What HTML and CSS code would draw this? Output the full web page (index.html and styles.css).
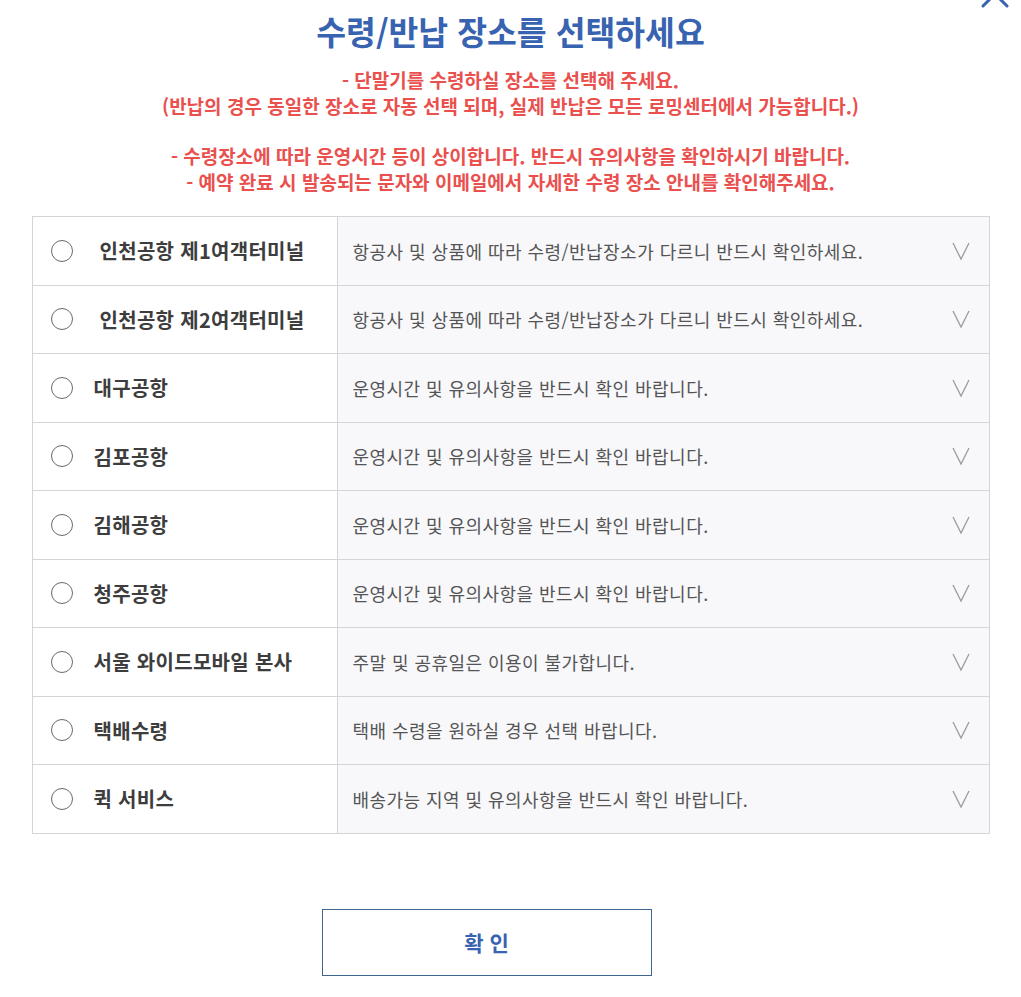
FILE: index.html
```html
<!DOCTYPE html>
<html lang="ko">
<head>
<meta charset="utf-8">
<title>수령/반납 장소를 선택하세요</title>
<link rel="stylesheet" href="styles.css">
</head>
<body>
<div class="modal">
  <button class="close" type="button" aria-label="닫기">
    <svg width="30" height="30" viewBox="0 0 30 30"><path d="M3 3 L27 27 M27 3 L3 27" stroke="#3763b0" stroke-width="3" fill="none" stroke-linecap="round"/></svg>
  </button>
  <h1 class="title">수령/반납 장소를 선택하세요</h1>
  <div class="notice">
    <p>- 단말기를 수령하실 장소를 선택해 주세요.<br>(반납의 경우 동일한 장소로 자동 선택 되며, 실제 반납은 모든 로밍센터에서 가능합니다.)</p>
    <p>- 수령장소에 따라 운영시간 등이 상이합니다. 반드시 유의사항을 확인하시기 바랍니다.<br>- 예약 완료 시 발송되는 문자와 이메일에서 자세한 수령 장소 안내를 확인해주세요.</p>
  </div>
  <div class="places">
    <div class="row">
      <label class="name"><span class="radio"></span><span class="label label-wide">인천공항 제1여객터미널</span></label>
      <div class="desc"><span>항공사 및 상품에 따라 수령/반납장소가 다르니 반드시 확인하세요.</span><svg class="chev" width="20" height="20" viewBox="0 0 20 20"><polyline points="2,2 10,18 18,2" fill="none" stroke="#9b9b9b" stroke-width="1.3"/></svg></div>
    </div>
    <div class="row">
      <label class="name"><span class="radio"></span><span class="label label-wide">인천공항 제2여객터미널</span></label>
      <div class="desc"><span>항공사 및 상품에 따라 수령/반납장소가 다르니 반드시 확인하세요.</span><svg class="chev" width="20" height="20" viewBox="0 0 20 20"><polyline points="2,2 10,18 18,2" fill="none" stroke="#9b9b9b" stroke-width="1.3"/></svg></div>
    </div>
    <div class="row">
      <label class="name"><span class="radio"></span><span class="label">대구공항</span></label>
      <div class="desc"><span>운영시간 및 유의사항을 반드시 확인 바랍니다.</span><svg class="chev" width="20" height="20" viewBox="0 0 20 20"><polyline points="2,2 10,18 18,2" fill="none" stroke="#9b9b9b" stroke-width="1.3"/></svg></div>
    </div>
    <div class="row">
      <label class="name"><span class="radio"></span><span class="label">김포공항</span></label>
      <div class="desc"><span>운영시간 및 유의사항을 반드시 확인 바랍니다.</span><svg class="chev" width="20" height="20" viewBox="0 0 20 20"><polyline points="2,2 10,18 18,2" fill="none" stroke="#9b9b9b" stroke-width="1.3"/></svg></div>
    </div>
    <div class="row">
      <label class="name"><span class="radio"></span><span class="label">김해공항</span></label>
      <div class="desc"><span>운영시간 및 유의사항을 반드시 확인 바랍니다.</span><svg class="chev" width="20" height="20" viewBox="0 0 20 20"><polyline points="2,2 10,18 18,2" fill="none" stroke="#9b9b9b" stroke-width="1.3"/></svg></div>
    </div>
    <div class="row">
      <label class="name"><span class="radio"></span><span class="label">청주공항</span></label>
      <div class="desc"><span>운영시간 및 유의사항을 반드시 확인 바랍니다.</span><svg class="chev" width="20" height="20" viewBox="0 0 20 20"><polyline points="2,2 10,18 18,2" fill="none" stroke="#9b9b9b" stroke-width="1.3"/></svg></div>
    </div>
    <div class="row">
      <label class="name"><span class="radio"></span><span class="label">서울 와이드모바일 본사</span></label>
      <div class="desc"><span>주말 및 공휴일은 이용이 불가합니다.</span><svg class="chev" width="20" height="20" viewBox="0 0 20 20"><polyline points="2,2 10,18 18,2" fill="none" stroke="#9b9b9b" stroke-width="1.3"/></svg></div>
    </div>
    <div class="row">
      <label class="name"><span class="radio"></span><span class="label">택배수령</span></label>
      <div class="desc"><span>택배 수령을 원하실 경우 선택 바랍니다.</span><svg class="chev" width="20" height="20" viewBox="0 0 20 20"><polyline points="2,2 10,18 18,2" fill="none" stroke="#9b9b9b" stroke-width="1.3"/></svg></div>
    </div>
    <div class="row">
      <label class="name"><span class="radio"></span><span class="label">퀵 서비스</span></label>
      <div class="desc"><span>배송가능 지역 및 유의사항을 반드시 확인 바랍니다.</span><svg class="chev" width="20" height="20" viewBox="0 0 20 20"><polyline points="2,2 10,18 18,2" fill="none" stroke="#9b9b9b" stroke-width="1.3"/></svg></div>
    </div>
  </div>
  <div class="actions">
    <button class="confirm" type="button">확 인</button>
  </div>
</div>
</body>
</html>
```
FILE: styles.css
```css
* { box-sizing: border-box; }
html, body { margin: 0; padding: 0; background: #fff; }
body {
  font-family: "Noto Sans CJK KR", "Noto Sans", sans-serif;
  width: 1021px;
  overflow: hidden;
}
.modal {
  position: relative;
  width: 958px;
  margin: 0 auto;
  padding-top: 8px;
  padding-bottom: 40px;
}
.close {
  position: absolute;
  top: -21px;
  right: -20px;
  width: 30px;
  height: 30px;
  padding: 0;
  border: 0;
  background: none;
}
.close svg { display: block; }
.title {
  margin: 0;
  text-align: center;
  font-size: 32.4px;
  line-height: 46px;
  font-weight: 700;
  color: #3763b0;
  letter-spacing: 0;
}
.notice {
  margin-top: 13px;
  text-align: center;
  color: #e9504e;
  font-size: 19px;
  font-weight: 700;
  line-height: 26px;
}
.notice p { margin: 0; }
.notice p + p { margin-top: 24px; }
.places {
  margin-top: 21px;
  border: 1px solid #d5d5d5;
  border-bottom: 0;
}
.row {
  display: grid;
  grid-template-columns: 305px 1fr;
  height: 68.5px;
  border-bottom: 1px solid #d5d5d5;
}
.name {
  display: flex;
  align-items: center;
  padding-left: 18px;
  border-right: 1px solid #d5d5d5;
  background: #fff;
}
.radio {
  width: 22px;
  height: 22px;
  border: 1.5px solid #6a6a6a;
  border-radius: 50%;
  flex: none;
}
.label {
  margin-left: 21px;
  font-size: 20px;
  font-weight: 700;
  color: #3d3d3d;
  letter-spacing: 0.3px;
}
.label-wide { margin-left: 27px; }
.desc {
  display: flex;
  align-items: center;
  justify-content: space-between;
  padding-left: 15px;
  padding-right: 18px;
  background: #f8f8fb;
  font-size: 18px;
  color: #555;
  letter-spacing: 0.45px;
}
.chev {
  flex: none;
  display: block;
}
.actions {
  margin-top: 75px;
  padding-left: 290px;
}
.confirm {
  width: 330px;
  height: 67px;
  border: 1px solid #3e6590;
  background: #fff;
  font-family: "Noto Sans CJK KR", "Noto Sans", sans-serif;
  font-size: 21px;
  font-weight: 700;
  color: #3763b0;
}
```
